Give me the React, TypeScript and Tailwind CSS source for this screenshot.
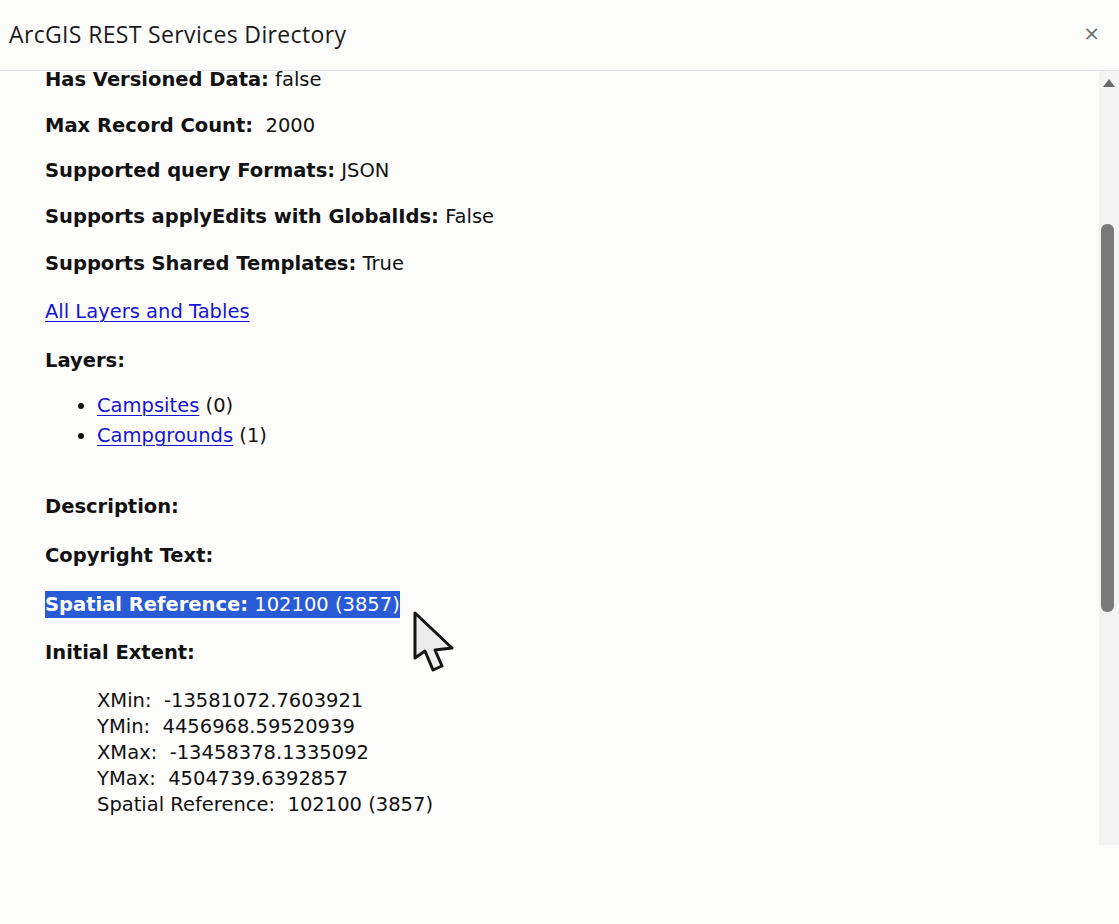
import React from "react";

const verdana = { fontFamily: '"DejaVu Sans", Verdana, sans-serif' };
const linkCls = "text-[#1414d6] underline decoration-1 underline-offset-[3px]";

function Field({ label, value, className = "" }: { label: string; value?: string; className?: string }) {
  return (
    <p className={"leading-[22px] " + className}>
      <b className="font-bold">{label}</b>
      {value !== undefined ? <span>{" " + value}</span> : null}
    </p>
  );
}

function Cursor() {
  return (
    <svg width="46" height="64" viewBox="0 0 46 64" className="absolute left-[412px] top-[540px]">
      <path
        d="M3 2 L3 47 L13 40 L21 59 L30 55 L23 39 L40 37 Z"
        fill="#ececec"
        stroke="#141414"
        strokeWidth="3"
        strokeLinejoin="round"
      />
    </svg>
  );
}

export default function App() {
  return (
    <div className="w-[1119px] h-[924px] bg-[#fcfcfb] flex flex-col overflow-hidden">
      <header
        className="h-[71px] flex items-center justify-between pl-[9px] pr-[20px] border-b border-[#dfe3e8]"
        style={{ fontFamily: '"Open Sans", "Noto Sans", sans-serif' }}
      >
        <h1 className="text-[23px] text-[#1b1b1b] tracking-[0.35px] mt-[-2px]">ArcGIS REST Services Directory</h1>
        <span className="text-[26px] text-[#707070] leading-none mt-[-4px]">×</span>
      </header>
      <div className="flex h-[774px]">
        <main className="relative flex-1 pl-[45px] text-[19.5px] text-[#121212]" style={verdana}>
          <div className="flex flex-col mt-[-2px]">
            <Field label="Has Versioned Data:" value="false" />
            <Field label="Max Record Count:" value={"\u00a02000"} className="mt-[24px]" />
            <Field label="Supported query Formats:" value="JSON" className="mt-[23px]" />
            <Field label="Supports applyEdits with GlobalIds:" value="False" className="mt-[24px]" />
            <Field label="Supports Shared Templates:" value="True" className="mt-[25px]" />
            <p className="leading-[22px] mt-[26px]">
              <a href="#" className={linkCls}>All Layers and Tables</a>
            </p>
            <Field label="Layers:" className="mt-[27px]" />
          </div>
          <ul className="mt-[19px] pl-[52px] list-disc leading-[30px]">
            <li>
              <a href="#" className={linkCls}>Campsites</a> (0)
            </li>
            <li>
              <a href="#" className={linkCls}>Campgrounds</a> (1)
            </li>
          </ul>
          <div className="mt-[45px] flex flex-col gap-[27px]">
            <Field label="Description:" />
            <Field label="Copyright Text:" />
            <p className="leading-[22px]">
              <span className="bg-[#2a5bd6] text-white py-[2px]">
                <b className="font-bold">Spatial Reference:</b> 102100 (3857)
              </span>
            </p>
            <Field label="Initial Extent:" className="-mt-[1px]" />
          </div>
          <div className="mt-[24px] pl-[52px] leading-[26px]">
            <div>XMin:{"\u00a0 "}-13581072.7603921</div>
            <div>YMin:{"\u00a0 "}4456968.59520939</div>
            <div>XMax:{"\u00a0 "}-13458378.1335092</div>
            <div>YMax:{"\u00a0 "}4504739.6392857</div>
            <div>Spatial Reference:{"\u00a0 "}102100 (3857)</div>
          </div>
          <Cursor />
        </main>
        <aside className="w-[20px] bg-[#f3f3f3] flex flex-col items-center pt-[8px]">
          <svg width="12" height="8" viewBox="0 0 12 8">
            <path d="M6 0 L12 8 L0 8 Z" fill="#6b6b6b" />
          </svg>
          <div className="mt-[137px] w-[13px] h-[388px] rounded-[6px] bg-[#7a7a7a] ml-[-4px]" />
        </aside>
      </div>
    </div>
  );
}
